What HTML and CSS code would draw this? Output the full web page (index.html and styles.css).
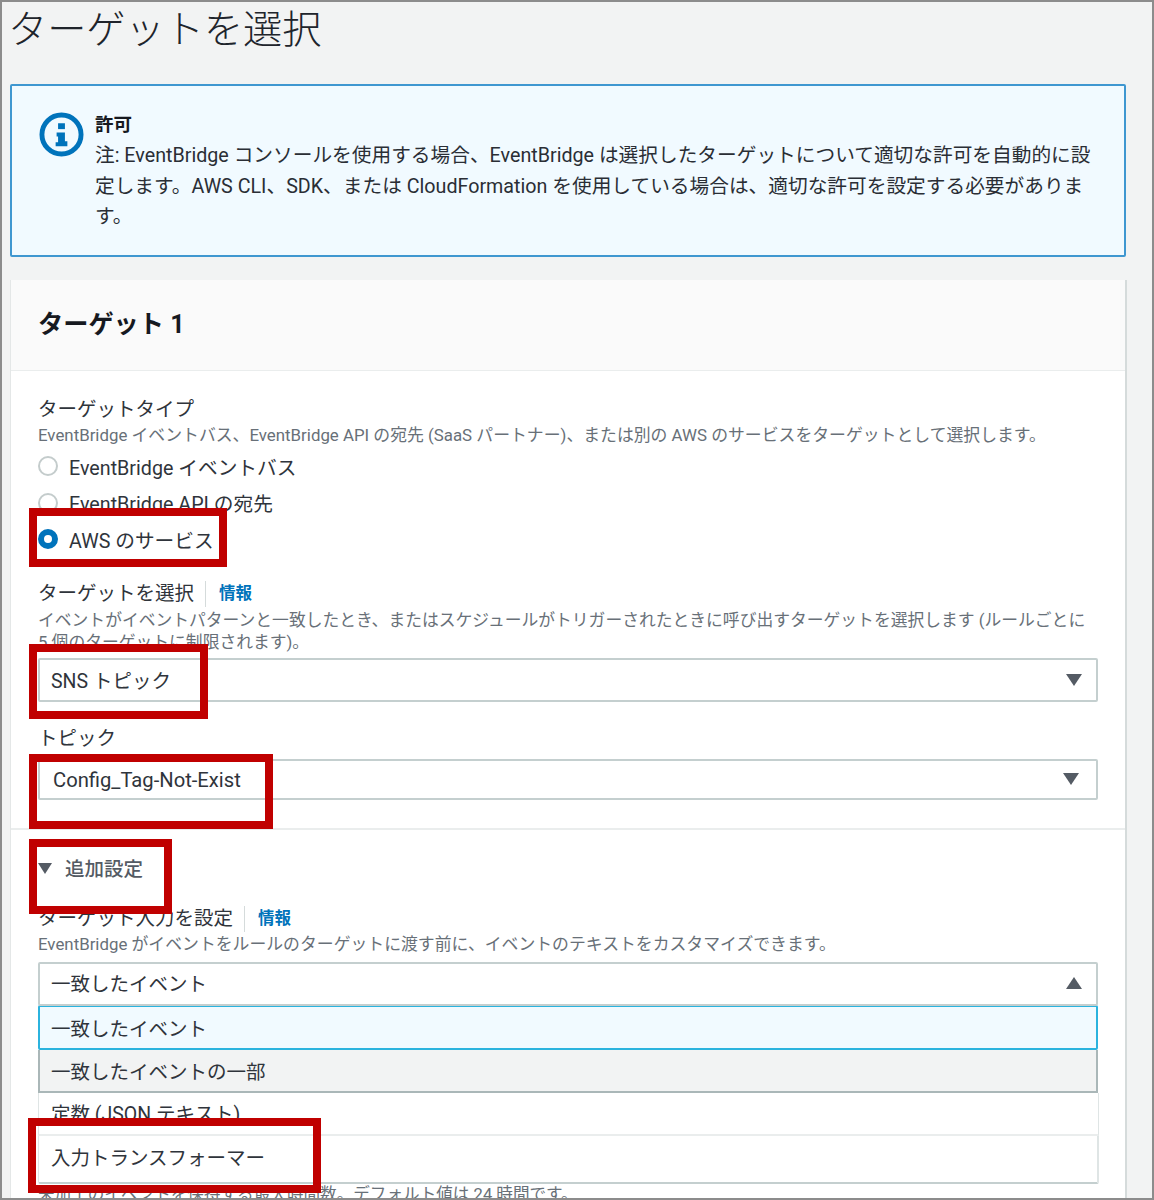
FILE: index.html
```html
<!DOCTYPE html>
<html lang="ja">
<head>
<meta charset="utf-8">
<title>ターゲットを選択</title>
<link rel="stylesheet" href="styles.css">
</head>
<body>
<div class="frame">
  <h1 class="page-title">ターゲットを選択</h1>
  <section class="alert">
    <svg class="alert-icon" viewBox="0 0 46 46" aria-hidden="true">
      <circle cx="23" cy="23" r="20" fill="none" stroke="#0073bb" stroke-width="5"/>
      <rect x="19.500" y="11.500" width="7" height="6" fill="#0073bb"/>
      <path d="M18 21h8.500v9H29v5H17v-4h2.500v-6H18z" fill="#0073bb"/>
    </svg>
    <div class="alert-body">
      <div class="alert-title">許可</div>
      <p class="alert-text">注: EventBridge コンソールを使用する場合、EventBridge は選択したターゲットについて適切な許可を自動的に設定します。AWS CLI、SDK、または CloudFormation を使用している場合は、適切な許可を設定する必要があります。</p>
    </div>
  </section>
  <section class="card">
    <header class="card-header">ターゲット 1</header>
    <div class="card-main">
      <div class="label">ターゲットタイプ</div>
      <div class="desc">EventBridge イベントバス、EventBridge API の宛先 (SaaS パートナー)、または別の AWS のサービスをターゲットとして選択します。</div>
      <div class="radios">
        <div class="radio-row"><span class="radio"></span>EventBridge イベントバス</div>
        <div class="radio-row"><span class="radio"></span>EventBridge API の宛先</div>
        <div class="radio-row"><span class="radio radio-on"></span>AWS のサービス</div>
      </div>
      <div class="label label-target">ターゲットを選択<a class="info">情報</a></div>
      <div class="desc desc-wrap">イベントがイベントパターンと一致したとき、またはスケジュールがトリガーされたときに呼び出すターゲットを選択します (ルールごとに 5 個のターゲットに制限されます)。</div>
      <div class="select select-sns">SNS トピック<span class="caret"></span></div>
      <div class="label label-topic">トピック</div>
      <div class="select select-topic">Config_Tag-Not-Exist<span class="caret caret-topic"></span></div>
    </div>
    <div class="card-extra">
      <div class="expander"><span class="exp-caret"></span>追加設定</div>
      <div class="label label-input">ターゲット入力を設定<a class="info">情報</a></div>
      <div class="desc">EventBridge がイベントをルールのターゲットに渡す前に、イベントのテキストをカスタマイズできます。</div>
      <div class="select select-open">一致したイベント<span class="caret caret-up"></span></div>
      <ul class="options">
        <li class="opt opt-selected">一致したイベント</li>
        <li class="opt opt-hover">一致したイベントの一部</li>
        <li class="opt opt-plain">定数 (JSON テキスト)</li>
        <li class="opt opt-last">入力トランスフォーマー</li>
      </ul>
      <div class="desc desc-cut">未加工のイベントを保持する最大時間数。デフォルト値は 24 時間です。</div>
    </div>
  </section>
  <div class="mark mark-aws"></div>
  <div class="mark mark-sns"></div>
  <div class="mark mark-topic"></div>
  <div class="mark mark-extra"></div>
  <div class="mark mark-trans"></div>
</div>
</body>
</html>
```

FILE: styles.css
```css
* { box-sizing: border-box; }
html, body { margin: 0; padding: 0; background: #fff; }
body {
  font-family: Roboto, "Noto Sans CJK JP", sans-serif;
  color: #16191f;
}
.frame {
  position: relative;
  width: 1154px;
  height: 1200px;
  overflow: hidden;
  background: #f2f3f3;
  border: 2px solid #8c8c8c;
  padding: 0 26px 0 8px;
}
.page-title {
  margin: 0 0 0 -2px;
  height: 82px;
  padding-top: 3px;
  font-size: 39.200px;
  line-height: 50px;
  font-weight: 300;
  color: #20242b;
}
.alert {
  display: flex;
  height: 173px;
  padding: 26px 28px 0 27px;
  background: #f1faff;
  border: 2px solid #3f97d0;
  border-radius: 2px;
}
.alert-icon { width: 45px; height: 45px; flex: none; margin-right: 11px; }
.alert-body { flex: 1; }
.alert-title { margin-top: 1px; font-size: 18.500px; line-height: 24px; font-weight: 700; }
.alert-text { margin: 4px 0 0; font-size: 19.700px; line-height: 30.500px; color: #2a2e35; }
.card {
  margin: 23px -1px 0 0;
  height: 930px;
  background: #fff;
  border-right: 2px solid #d5dbdb;
  border-left: 1px solid #e4e7e7;
}
.card-header {
  height: 91px;
  padding: 23px 0 0 27px;
  font-size: 25.200px;
  line-height: 44px;
  font-weight: 700;
  background: #fafafa;
  border-bottom: 1px solid #eaeded;
}
.card-main { height: 459px; padding: 25px 27px 0 27px; border-bottom: 2px solid #eaeded; }
.label { font-size: 19.500px; line-height: 28px; color: #2f343b; }
.desc { font-size: 16.850px; line-height: 22px; color: #687078; }
.radios { margin-top: 2px; }
.radio-row {
  display: flex;
  align-items: center;
  height: 36.500px;
  font-size: 19.700px;
  color: #2f343b;
}
.radio {
  width: 20px;
  height: 20px;
  flex: none;
  margin-right: 11px;
  background: #fff;
  border: 2px solid #c4cccc;
  border-radius: 50%;
}
.radio-on { border: 6px solid #0073bb; }
.label-target { margin-top: 22px; display: flex; align-items: center; }
.info {
  margin-left: 11px;
  padding-left: 13px;
  border-left: 1px solid #d5dbdb;
  font-size: 16.500px;
  font-weight: 700;
  color: #0073bb;
  line-height: 26px;
}
.desc-wrap { margin-top: 1px; font-size: 16.800px; }
.desc-cut { font-size: 16.600px; }
.select {
  position: relative;
  display: flex;
  align-items: center;
  background: #fff;
  border: 2px solid #c4cfcf;
  border-radius: 2px;
  font-size: 19.500px;
  color: #2f343b;
}
.select-sns { height: 44px; margin-top: 5px; padding-left: 11px; }
.label-topic { margin-top: 23px; }
.select-topic { height: 41px; margin-top: 6px; padding: 2px 0 0 13px; font-size: 20.200px; }
.caret {
  position: absolute;
  right: 14px;
  top: 14px;
  width: 0;
  height: 0;
  border-left: 8px solid transparent;
  border-right: 8px solid transparent;
  border-top: 12px solid #545b64;
}
.caret-topic { right: 17px; top: 12px; }
.caret-up { border-top: 0; border-bottom: 12px solid #545b64; top: 13px; }
.card-extra { padding: 0 27px; }
.expander {
  display: flex;
  align-items: center;
  height: 28px;
  margin-top: 23px;
  font-size: 19.500px;
  font-weight: 500;
  color: #545b64;
}
.exp-caret {
  width: 0;
  height: 0;
  margin: 2px 13px 0 0;
  border-left: 7.500px solid transparent;
  border-right: 7.500px solid transparent;
  border-top: 11px solid #545b64;
}
.label-input { display: flex; align-items: center; margin-top: 24px; }
.select-open { height: 44px; margin-top: 7px; padding: 0 0 3px 11px; }
.options {
  list-style: none;
  margin: 0;
  padding: 0;
  font-size: 19.500px;
  color: #2f343b;
  width: 1061px;
}
.opt { display: flex; align-items: center; padding-left: 12px; background: #fff; }
.opt-selected {
  height: 45px;
  width: 1060px;
  background: #f1faff;
  border: 2px solid #2bb3de;
  padding-left: 11px;
  margin-top: -1px;
  border-radius: 2px;
}
.opt-hover {
  height: 43px;
  width: 1060px;
  background: #f2f3f3;
  border: 2px solid #aab7b8;
  border-top: 0;
  padding-left: 11px;
}
.opt-plain { height: 43px; padding-bottom: 2px; border-right: 1px solid #dfe5e5; border-left: 1px solid #dfe5e5; border-bottom: 2px solid #eaeded; }
.opt-last { height: 48px; padding-bottom: 6px; border-right: 2px solid #dfe5e5; border-left: 1px solid #dfe5e5; border-bottom: 2px solid #c4cfcf; border-radius: 0 0 2px 2px; }
.mark {
  position: absolute;
  border: 8px solid #c00000;
}
.mark-aws { left: 27px; top: 506px; width: 198px; height: 59px; }
.mark-sns { left: 27px; top: 642px; width: 179px; height: 75px; }
.mark-topic { left: 27px; top: 752px; width: 244px; height: 75px; }
.mark-extra { left: 27px; top: 837px; width: 143px; height: 75px; }
.mark-trans { left: 26px; top: 1116px; width: 293px; height: 75px; }
```
